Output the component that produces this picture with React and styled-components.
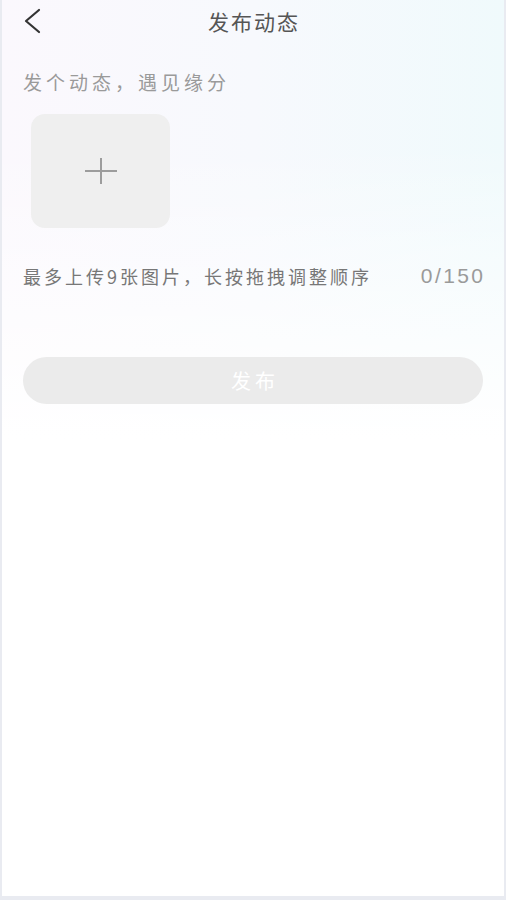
import React from "react";
import styled, { createGlobalStyle } from "styled-components";

const Global = createGlobalStyle`
  html, body { margin: 0; padding: 0; background: #eceef3; }
  * { box-sizing: border-box; }
`;

const Frame = styled.div`
  width: 506px;
  height: 900px;
  padding: 0 2px 4px 2px;
  background: #e9ebf1;
`;

const Screen = styled.div`
  height: 100%;
  display: flex;
  flex-direction: column;
  padding: 0 21px;
  background:
    linear-gradient(180deg, rgba(255,255,255,0) 0%, rgba(255,255,255,0) 16%, #ffffff 49%),
    linear-gradient(90deg, #fbf8fd 0%, #f7f9fd 50%, #f0fafc 100%);
  font-family: "Noto Sans CJK SC", "Noto Sans", sans-serif;
`;

const Header = styled.div`
  height: 42px;
  display: grid;
  grid-template-columns: 1fr auto 1fr;
  align-items: center;
`;

const Back = styled.button`
  justify-self: start;
  border: 0;
  background: none;
  padding: 0;
  width: 22px;
  height: 26px;
  display: flex;
  align-items: center;
  cursor: pointer;
`;

const Title = styled.h1`
  margin: 0 -2px 0 0;
  font-size: 21px;
  font-weight: 400;
  letter-spacing: 2px;
  color: #555;
  line-height: 24px;
`;

const Subtitle = styled.div`
  margin-top: 28px;
  font-size: 19px;
  line-height: 24px;
  letter-spacing: 4px;
  color: #9a9a9a;
`;

const Upload = styled.button`
  margin: 20px 0 0 8px;
  width: 139px;
  height: 114px;
  border: 0;
  border-radius: 14px;
  background: #efefef;
  display: flex;
  align-items: center;
  justify-content: center;
  cursor: pointer;
`;

const HintRow = styled.div`
  margin-top: 36px;
  display: flex;
  justify-content: space-between;
  align-items: center;
  height: 24px;
`;

const Hint = styled.span`
  font-size: 18px;
  letter-spacing: 3px;
  color: #777;
`;

const Count = styled.span`
  font-family: "Liberation Sans", Arial, sans-serif;
  font-size: 21px;
  letter-spacing: 2.4px;
  margin-right: -2.4px;
  color: #9a9a9a;
`;

const Submit = styled.button`
  margin-top: 69px;
  height: 47px;
  width: 100%;
  border: 0;
  border-radius: 24px;
  background: #ebebeb;
  color: #fff;
  font-family: "Noto Sans CJK SC", "Noto Sans", sans-serif;
  font-size: 20px;
  letter-spacing: 4px;
  text-indent: 4px;
`;

export default function App() {
  return (
    <>
      <Global />
      <Frame>
        <Screen>
          <Header>
            <Back aria-label="返回">
              <svg width="20" height="26" viewBox="0 0 20 26" fill="none">
                <path d="M16 2 L3 13 L16 24" stroke="#333" strokeWidth="2.2" strokeLinecap="round" strokeLinejoin="round" />
              </svg>
            </Back>
            <Title>发布动态</Title>
            <span />
          </Header>
          <Subtitle>发个动态，遇见缘分</Subtitle>
          <Upload aria-label="添加图片">
            <svg width="34" height="28" viewBox="0 0 34 28" fill="none">
              <path d="M1 14 H33 M17 1 V27" stroke="#9c9c9c" strokeWidth="2" />
            </svg>
          </Upload>
          <HintRow>
            <Hint>最多上传9张图片，长按拖拽调整顺序</Hint>
            <Count>0/150</Count>
          </HintRow>
          <Submit>发布</Submit>
        </Screen>
      </Frame>
    </>
  );
}
